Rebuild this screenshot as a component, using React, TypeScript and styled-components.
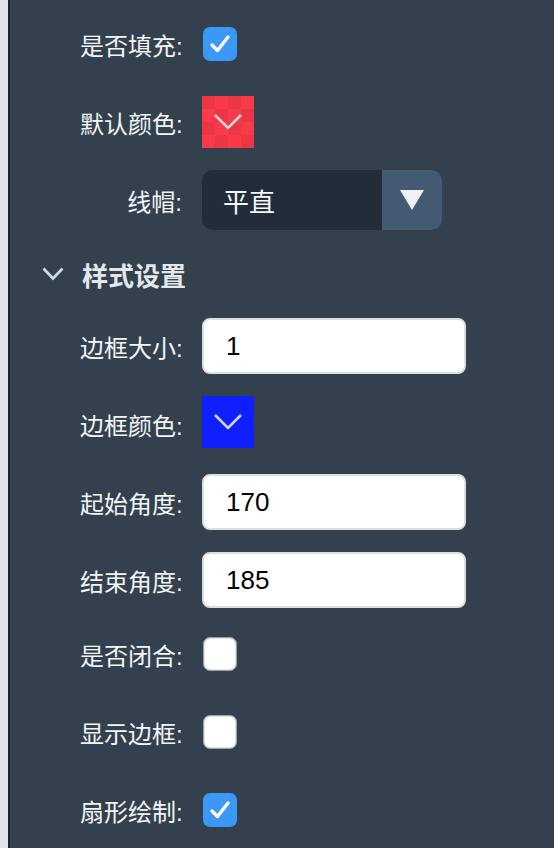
import React from 'react';
import styled, { createGlobalStyle } from 'styled-components';

const GlobalStyle = createGlobalStyle`
html, body {
    margin: 0;
    padding: 0;
    background-color: #33414f;
}
* {
    box-sizing: border-box;
}
`

const Root = styled.div`
display: flex;
min-height: 100vh;
font-family: "Liberation Sans", "Noto Sans CJK SC", sans-serif;
`

const Edge = styled.div`
width: 10px;
flex-shrink: 0;
background-color: #dfe5ea;
border-right: 2px solid #1c2631;
`

const Panel = styled.div`
flex: 1;
background-color: #33414f;
padding: 16px 0 0 0;
display: flex;
flex-direction: column;
`

const Row = styled.div<{ $compact?: boolean; $top?: boolean }>`
display: flex;
align-items: ${p => p.$top ? 'flex-start' : 'center'};
gap: 20px;
height: ${p => p.$compact ? '48px' : '56px'};
margin-bottom: ${p => p.$compact ? '30px' : '22px'};
padding-left: 70px;
`

const Label = styled.div`
width: 102px;
flex-shrink: 0;
align-self: center;
text-align: right;
color: #f2f4f6;
font-size: 24px;
white-space: nowrap;
`

const SectionHeader = styled.div`
display: flex;
align-items: center;
height: 46px;
margin-bottom: 22px;
padding-left: 32px;
padding-top: 2px;
color: #e4e7ea;
font-size: 26px;
font-weight: bold;
gap: 18px;
`

const Chevron = styled.svg`
display: block;
`

const Checkbox = styled.div<{ $checked?: boolean }>`
width: 34px;
height: 34px;
margin-left: 1px;
border-radius: 7px;
display: flex;
align-items: center;
justify-content: center;
background-color: ${p => p.$checked ? '#3c98f6' : '#ffffff'};
border: ${p => p.$checked ? 'none' : '1px solid #9aa0a6'};
box-shadow: ${p => p.$checked ? 'none' : 'inset 0 0 2px rgba(0,0,0,0.35)'};
`

const Swatch = styled.div<{ $color: string; $alt?: string }>`
width: 52px;
height: 52px;
display: flex;
align-items: center;
justify-content: center;
background-color: ${p => p.$color};
background-image: ${p => p.$alt
    ? `repeating-conic-gradient(${p.$color} 0 25%, ${p.$alt} 0 50%)`
    : 'none'};
background-size: 26px 26px;
`

const Select = styled.div`
display: flex;
flex-shrink: 0;
width: 240px;
height: 60px;
border-radius: 10px;
overflow: hidden;
background-color: #222d3a;
`

const SelectValue = styled.div`
flex: 1;
display: flex;
align-items: center;
padding-left: 21px;
color: #f4f6f8;
font-size: 26px;
`

const SelectButton = styled.div`
width: 60px;
display: flex;
align-items: center;
justify-content: center;
background-color: #435a72;
`

const TextInput = styled.input`
width: 264px;
height: 56px;
border: 2px solid #dedede;
border-radius: 8px;
background-color: #ffffff;
padding: 0 0 0 22px;
font-family: "Liberation Sans", sans-serif;
font-size: 26px;
color: #000000;
outline: none;
`

const Check: React.FC = () => (
    <svg width="22" height="20" viewBox="0 0 22 20">
        <path d="M3 11 L8.5 16.5 L19 3" fill="none" stroke="#ffffff" strokeWidth="3.4" strokeLinecap="round" strokeLinejoin="round" />
    </svg>
)

const Down: React.FC = () => (
    <svg width="30" height="18" viewBox="0 0 30 18">
        <path d="M2 2 L15 15 L28 2" fill="none" stroke="#d2d4d8" strokeWidth="2.6" />
    </svg>
)

const Triangle: React.FC = () => (
    <svg width="24" height="20" viewBox="0 0 24 20">
        <path d="M0 0 L24 0 L12 20 Z" fill="#eef1f4" />
    </svg>
)

export default function App() {
    return (
        <Root>
            <GlobalStyle />
            <Edge />
            <Panel>
                <Row>
                    <Label>是否填充:</Label>
                    <Checkbox $checked><Check /></Checkbox>
                </Row>
                <Row>
                    <Label>默认颜色:</Label>
                    <Swatch $color="#f83a4a" $alt="#ec3545"><Down /></Swatch>
                </Row>
                <Row>
                    <Label>线帽:</Label>
                    <Select>
                        <SelectValue>平直</SelectValue>
                        <SelectButton><Triangle /></SelectButton>
                    </Select>
                </Row>
                <SectionHeader>
                    <Chevron width="22" height="14" viewBox="0 0 22 14">
                        <path d="M1.5 1.5 L11 11.5 L20.5 1.5" fill="none" stroke="#d6d9dc" strokeWidth="2.6" />
                    </Chevron>
                    样式设置
                </SectionHeader>
                <Row>
                    <Label>边框大小:</Label>
                    <TextInput defaultValue="1" />
                </Row>
                <Row $top>
                    <Label>边框颜色:</Label>
                    <Swatch $color="#0f1fff"><Down /></Swatch>
                </Row>
                <Row>
                    <Label>起始角度:</Label>
                    <TextInput defaultValue="170" />
                </Row>
                <Row>
                    <Label>结束角度:</Label>
                    <TextInput defaultValue="185" />
                </Row>
                <Row $compact>
                    <Label>是否闭合:</Label>
                    <Checkbox />
                </Row>
                <Row $compact>
                    <Label>显示边框:</Label>
                    <Checkbox />
                </Row>
                <Row $compact>
                    <Label>扇形绘制:</Label>
                    <Checkbox $checked><Check /></Checkbox>
                </Row>
            </Panel>
        </Root>
    )
}
